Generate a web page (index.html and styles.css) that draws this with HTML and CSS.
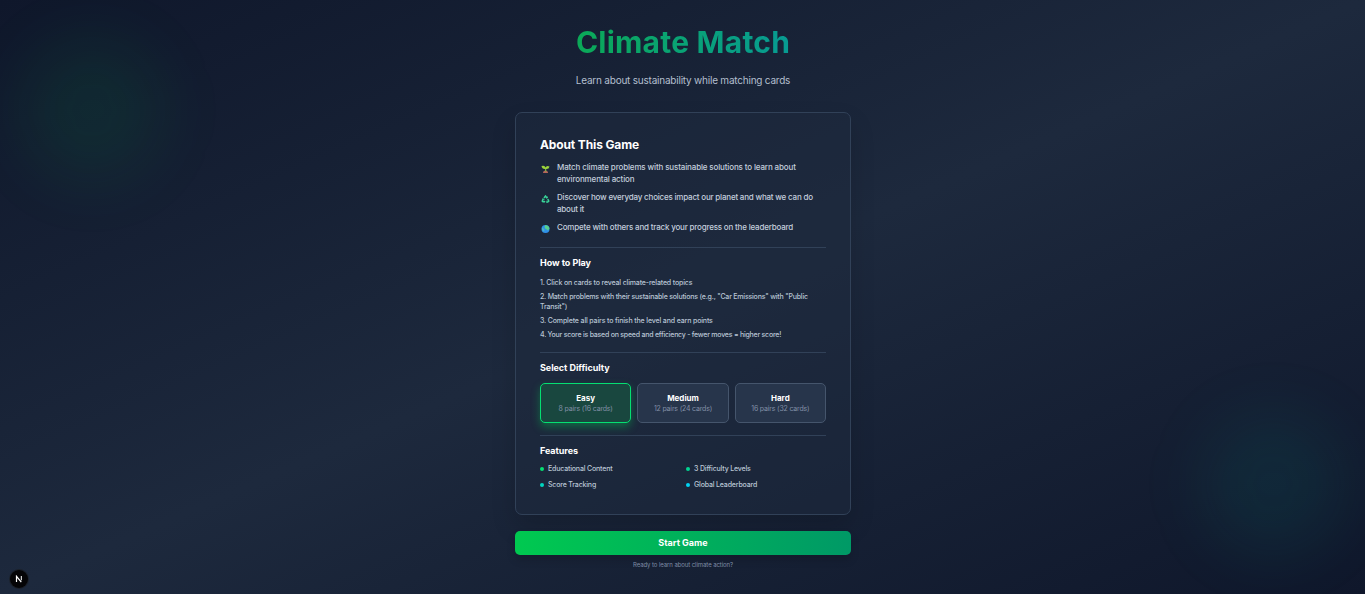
FILE: index.html
```html
<!DOCTYPE html>
<html lang="en">
<head>
<meta charset="utf-8">
<title>Climate Match</title>
<link rel="stylesheet" href="styles.css">
</head>
<body>
<div class="glow glow-left"></div>
<div class="glow glow-right"></div>
<main class="page">
  <header class="hero">
    <h1 class="title">Climate Match</h1>
    <p class="subtitle">Learn about sustainability while matching cards</p>
  </header>
  <section class="card">
    <div class="about">
      <h2 class="about-title">About This Game</h2>
      <ul class="points">
        <li class="point point-match">
          <svg class="point-icon" viewBox="0 0 16 16"><path d="M3 16q0-5 5-5t5 5z" fill="#b5655a"/><path d="M7 13V6h2.500v7z" fill="#7cb342"/><path d="M8 8Q1 9 0 2q7-2 8 3 2-5 8-2-1 6-8 5z" fill="#9bd33b"/></svg>
          <span>Match climate problems with sustainable solutions to learn about environmental action</span>
        </li>
        <li class="point point-discover">
          <svg class="point-icon" viewBox="0 0 16 16" fill="none" stroke="#38d399" stroke-width="3"><path d="M5 6l3-4 3 4M12.500 8l2 4-2 2H10M7 13.500H3L1.500 12l2-4"/><path d="M9 6h3V3M11 11l-2 2.500 2 2M1 8h4v3" stroke-width="1.500"/></svg>
          <span>Discover how everyday choices impact our planet and what we can do about it</span>
        </li>
        <li class="point point-compete">
          <svg class="point-icon" viewBox="0 0 16 16"><circle cx="8" cy="8" r="8" fill="#2f8fe8"/><path d="M8 0q7 1 8 7l-3 4-4-3-2-1-1-4z" fill="#58cf8b"/><path d="M1 5l3 2 2 3-1 3Q0 11 1 5z" fill="#4cb8c4"/></svg>
          <span>Compete with others and track your progress on the leaderboard</span>
        </li>
      </ul>
    </div>
    <div class="section howto">
      <h3 class="heading">How to Play</h3>
      <ol class="steps">
        <li class="step-click">1. Click on cards to reveal climate-related topics</li>
        <li class="step-match">2. Match problems with their sustainable solutions (e.g., "Car Emissions" with "Public Transit")</li>
        <li class="step-finish">3. Complete all pairs to finish the level and earn points</li>
        <li class="step-score">4. Your score is based on speed and efficiency - fewer moves = higher score!</li>
      </ol>
    </div>
    <div class="section difficulty">
      <h3 class="heading">Select Difficulty</h3>
      <div class="levels">
        <button class="level level-active"><span class="level-name">Easy</span><span class="level-info">8 pairs (16 cards)</span></button>
        <button class="level"><span class="level-name">Medium</span><span class="level-info">12 pairs (24 cards)</span></button>
        <button class="level"><span class="level-name">Hard</span><span class="level-info">16 pairs (32 cards)</span></button>
      </div>
    </div>
    <div class="section features">
      <h3 class="heading">Features</h3>
      <div class="feature-grid">
        <div class="feature"><i class="dot dot-green"></i>Educational Content</div>
        <div class="feature"><i class="dot dot-emerald"></i>3 Difficulty Levels</div>
        <div class="feature"><i class="dot dot-teal"></i>Score Tracking</div>
        <div class="feature"><i class="dot dot-cyan"></i>Global Leaderboard</div>
      </div>
    </div>
  </section>
  <button class="start">Start Game</button>
  <p class="footnote">Ready to learn about climate action?</p>
</main>
<div class="dev-badge"><svg class="dev-icon" viewBox="0 0 8 8" fill="none" stroke="#fff"><path d="M1.500 7V1.300L6.300 7.200" stroke-width="1.200"/><path d="M6.300 1v4.300" stroke-width="1"/></svg></div>
</body>
</html>
```
FILE: styles.css
```css
* { box-sizing: border-box; margin: 0; padding: 0; }
html { font-size: 8px; }
body {
  height: 594px;
  overflow: hidden;
  position: relative;
  font-family: Inter, "Liberation Sans", sans-serif;
  color: #fff;
  background: linear-gradient(to bottom right in oklab, #0f172b 0%, #1d293d 50%, #0f172b 100%);
}
ul, ol { list-style: none; }
button { font: inherit; color: inherit; border: 0; }

.glow { position: absolute; width: 144px; height: 144px; border-radius: 50%; filter: blur(30px); }
.glow-left { left: 20px; top: 38px; background: rgba(0, 201, 80, .08); }
.glow-right { right: 20px; bottom: 38px; background: rgba(0, 187, 167, .08); }

.page { position: relative; width: 336px; margin-left: 515px; padding-top: 23px; display: flex; flex-direction: column; }
.hero { height: 89px; text-align: center; white-space: nowrap; }
.title {
  width: 216px;
  margin: 0 auto;
  font-size: 30px;
  line-height: 38px;
  font-weight: 700;
  letter-spacing: .22px;
  color: transparent;
  background: linear-gradient(to right, #0ba957, #079b93);
  background-clip: text;
  -webkit-background-clip: text;
}
.subtitle { margin-top: 12px; font-size: 10px; line-height: 14px; color: #b3bfce; letter-spacing: -.22px; }

.card {
  height: 403px;
  padding: 24px;
  border: 1px solid #314158;
  border-radius: 7px;
  background: rgba(29, 41, 61, .5);
  box-shadow: 0 12px 25px rgba(0, 0, 0, .15);
}
.about-title { font-size: 12px; line-height: 16px; font-weight: 700; letter-spacing: -.13px; }
.points { margin-top: 8px; display: flex; flex-direction: column; gap: 6px; }
.point { display: flex; gap: 7px; font-size: 8px; line-height: 12px; font-weight: 500; color: #c3cedc; }
.point-match { letter-spacing: -.14px; }
.point-discover { letter-spacing: -.2px; }
.point-compete { letter-spacing: -.19px; }
.point-icon { width: 9px; height: 8px; margin: 4px 0 0 1px; flex: none; }

.section { border-top: 1px solid #314158; }
.howto { margin-top: 14px; height: 105px; padding-top: 8px; }
.heading { font-size: 9px; line-height: 14px; font-weight: 700; letter-spacing: -.05px; }
.steps { margin-top: 8px; display: flex; flex-direction: column; gap: 4px; font-size: 7px; line-height: 10px; font-weight: 500; color: #b9c5d4; }
.step-click { letter-spacing: -.15px; }
.step-match { letter-spacing: -.2px; }
.step-finish { letter-spacing: -.14px; }
.step-score { letter-spacing: -.23px; }
.difficulty { height: 83px; padding-top: 8px; }
.levels { margin-top: 8px; display: grid; grid-template-columns: repeat(3, 1fr); gap: 6px; }
.level {
  height: 40px;
  display: flex;
  flex-direction: column;
  align-items: center;
  padding-top: 9px;
  border: 1px solid #45556c;
  border-radius: 5px;
  background: #27354b;
}
.level-active { border-color: #05df72; background: #19473f; box-shadow: 0 4px 8px rgba(0, 201, 80, .4); }
.level-name { font-size: 8px; line-height: 11px; font-weight: 700; }
.level-info { font-size: 7px; line-height: 10px; color: #8290a7; white-space: nowrap; letter-spacing: -.18px; }
.features { padding-top: 8px; }
.feature-grid { margin-top: 6px; display: grid; grid-template-columns: 1fr 1fr; gap: 6px; }
.feature { display: flex; align-items: center; gap: 4px; font-size: 7px; line-height: 10px; font-weight: 500; letter-spacing: -.17px; color: #bac6d5; }
.dot { width: 4px; height: 4px; border-radius: 50%; }
.dot-green { background: #05df72; }
.dot-emerald { background: #00d492; }
.dot-teal { background: #00d5be; }
.dot-cyan { background: #00d3f2; }

.start {
  height: 24px;
  margin-top: 16px;
  padding-bottom: 1px;
  border-radius: 5px;
  font-size: 9px;
  font-weight: 700;
  background: linear-gradient(to right, #00c950, #009966);
  box-shadow: 0 5px 8px rgba(0, 0, 0, .15);
}
.footnote { margin-top: 6px; font-size: 6px; line-height: 8px; text-align: center; color: #7f8da6; letter-spacing: -.08px; }

.dev-badge {
  position: absolute;
  left: 10px;
  top: 570px;
  width: 18px;
  height: 18px;
  border-radius: 50%;
  display: grid;
  place-items: center;
  background: #050507;
  box-shadow: 0 0 0 1px #1b2029;
}
.dev-icon { width: 8px; height: 8px; }
```
